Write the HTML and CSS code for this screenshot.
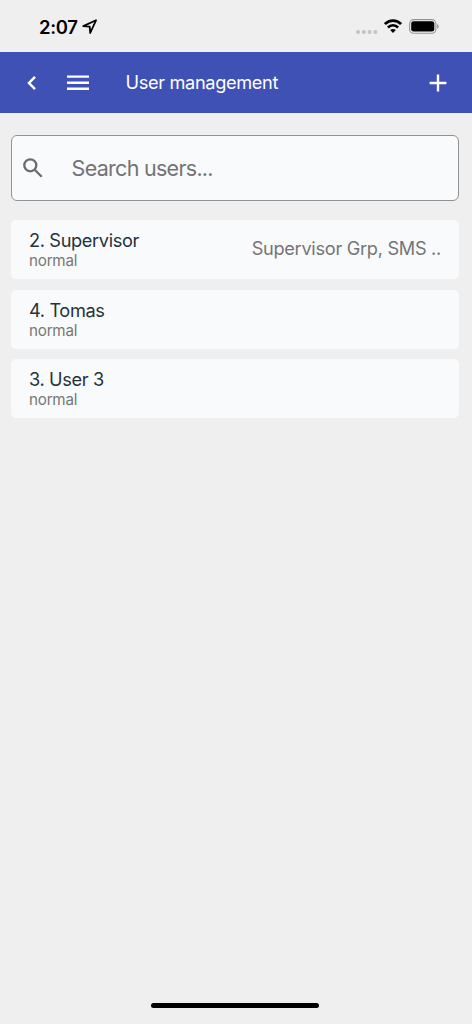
FILE: index.html
```
<!DOCTYPE html>
<html lang="en">
<head>
<meta charset="utf-8">
<title>User management</title>
<link rel="stylesheet" href="styles.css">
</head>
<body>
<div class="status">
  <div class="clock"><span class="time">2:07</span>
    <svg class="location" width="16" height="16" viewBox="0 0 16 16"><path d="M1.3 7.1 14 1.3 8.2 14 7.7 7.6Z" fill="none" stroke="#000" stroke-width="1.8" stroke-linejoin="round"/></svg>
  </div>
  <div class="indicators">
    <svg width="22" height="16" viewBox="0 0 22 16" fill="#c3c3c4"><circle cx="2" cy="12" r="2"/><circle cx="7.8" cy="12" r="2"/><circle cx="13.6" cy="12" r="2"/><circle cx="19.4" cy="12" r="2"/></svg>
    <svg class="wifi" width="18" height="14" viewBox="0 0 18 14" fill="none" stroke="#000" stroke-width="2.7"><path d="M.9 5.1C5.4.4 12.6.4 17.1 5.1M3.9 8.5C6.8 5.5 11.2 5.5 14.1 8.5"/><path d="M6.2 11.1C7.7 9.6 10.3 9.6 11.8 11.1L9 14Z" fill="#000" stroke="none"/></svg>
    <svg class="battery" width="31" height="15" viewBox="0 0 31 15"><rect x=".6" y=".6" width="26.3" height="13.6" rx="4" fill="none" stroke="#969697" stroke-width="1.1"/><rect x="2.2" y="2.2" width="23.1" height="10.4" rx="2.4"/><path d="M28.2 5.1q1.5.7 1.5 2.3t-1.5 2.3Z" fill="#969697"/></svg>
  </div>
</div>
<header class="bar">
  <svg class="back" width="10" height="16" viewBox="0 0 10 16"><path d="M8 1.8 2 8l6 6.2" fill="none" stroke="#fff" stroke-width="2.5"/></svg>
  <svg class="menu" width="22" height="16" viewBox="0 0 22 16" fill="#fff"><path d="M0 .4h22v2.4H0zM0 6.5h22v2.4H0zM0 12.6h22v2.4H0z"/></svg>
  <h1 class="title">User management</h1>
  <svg class="add" width="18" height="18" viewBox="0 0 18 18" fill="none" stroke="#fff" stroke-width="2.4"><path d="M.6 9h16.8M9 .6v16.8"/></svg>
</header>
<main class="content">
  <div class="search">
    <svg width="20" height="20" viewBox="0 0 20 20" fill="none" stroke="#6b6b6b" stroke-width="2.3"><circle cx="7.3" cy="7.3" r="6"/><path d="m11.7 11.7 7 7"/></svg>
    <span class="placeholder">Search users...</span>
  </div>
  <div class="users">
    <div class="card"><div><div class="name">2. Supervisor</div><div class="role">normal</div></div><div class="groups">Supervisor Grp, SMS ..</div></div>
    <div class="card"><div><div class="name">4. Tomas</div><div class="role">normal</div></div></div>
    <div class="card"><div><div class="name">3. User 3</div><div class="role">normal</div></div></div>
  </div>
</main>
<div class="home"></div>
</body>
</html>
```
FILE: styles.css
```
* { box-sizing: border-box; }
body {
  margin: 0;
  height: 1024px;
  display: flex;
  flex-direction: column;
  background: #efefef;
  font-family: Inter, "Liberation Sans", sans-serif;
  overflow: hidden;
}
svg { display: block; flex: none; }
.status {
  height: 52px;
  padding: 0 32px 0 39px;
  display: flex;
  justify-content: space-between;
}
.clock { display: flex; padding-top: 16px; }
.time {
  width: 43px;
  font-size: 18.5px;
  line-height: 23px;
  font-weight: 600;
  letter-spacing: -0.3px;
}
.location { margin-top: 3px; }
.indicators { display: flex; padding-top: 19px; }
.wifi { margin-left: 6px; }
.battery { margin-left: 7px; }
.indicators svg:first-child { margin-top: 1px; }
.bar {
  height: 61.4px;
  padding: 0 25px 0 27px;
  display: flex;
  align-items: center;
  background: #4051b5;
  color: #fff;
}
.menu { margin-left: 30px; }
.title {
  margin: 0 0 2px 36.5px;
  font-size: 18.2px;
  line-height: 24px;
  font-weight: 400;
  letter-spacing: -0.35px;
  white-space: nowrap;
}
.add { margin-left: auto; }
.content { flex: 1; padding: 22px 13px 0 11px; }
.search {
  height: 66px;
  display: flex;
  align-items: center;
  padding-left: 11px;
  border: 1px solid #929292;
  border-radius: 6px;
  background: #f9fafc;
}
.placeholder {
  margin-left: 28.6px;
  font-size: 21.5px;
  line-height: 28px;
  letter-spacing: -0.72px;
  color: #737373;
}
.users { display: flex; flex-direction: column; gap: 10.6px; margin-top: 18.6px; }
.card {
  height: 59px;
  display: flex;
  justify-content: space-between;
  padding: 9px 18px 0;
  border-radius: 5px;
  background: #f9fafc;
}
.name { font-size: 18.2px; line-height: 23px; letter-spacing: -0.36px; color: #263238; }
.role { font-size: 15.2px; line-height: 18.4px; letter-spacing: -0.22px; color: #777; }
.groups { padding-top: 8px; font-size: 18.2px; line-height: 23px; letter-spacing: -0.3px; color: #757575; white-space: nowrap; }
.home { width: 168px; height: 5.5px; margin: 0 auto 16px 151px; border-radius: 3px; background: #000; }
```
